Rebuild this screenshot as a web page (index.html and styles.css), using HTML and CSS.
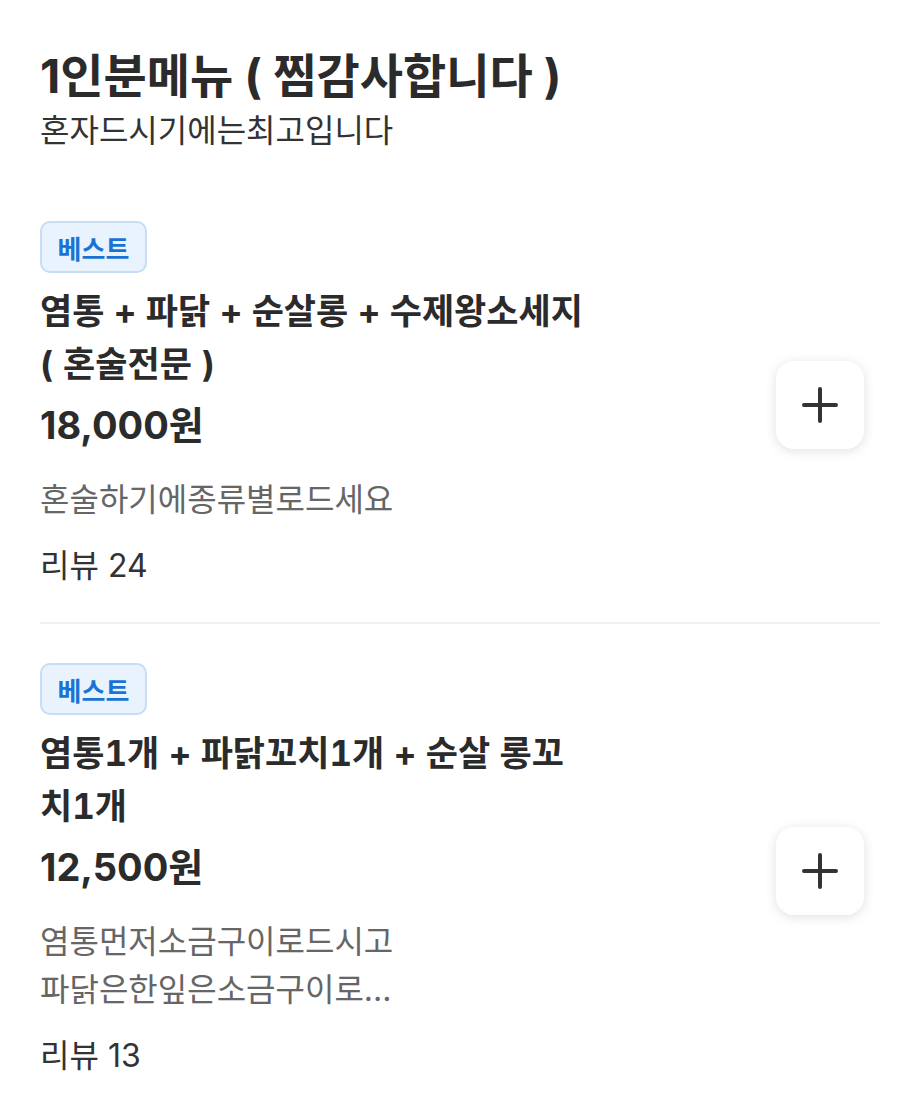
FILE: index.html
```html
<!DOCTYPE html>
<html lang="ko">
<head>
<meta charset="utf-8">
<title>1인분메뉴</title>
<link rel="stylesheet" href="styles.css">
</head>
<body>
<main class="page">
  <header class="section-head">
    <h1 class="section-title">1인분메뉴 ( 찜감사합니다 )</h1>
    <p class="section-sub">혼자드시기에는최고입니다</p>
  </header>

  <ul class="menu-list">
    <li class="menu-item">
      <div class="menu-info">
        <span class="badge">베스트</span>
        <h2 class="menu-name">염통 + 파닭 + 순살롱 + 수제왕소세지 ( 혼술전문 )</h2>
        <p class="menu-price">18,000원</p>
        <p class="menu-desc">혼술하기에종류별로드세요</p>
        <p class="menu-review">리뷰 24</p>
      </div>
      <button class="add-btn" type="button" aria-label="담기">
        <svg width="36" height="36" viewBox="0 0 36 36" aria-hidden="true"><path d="M18 2v32M2 18h32" stroke="#333" stroke-width="4" stroke-linecap="round" fill="none"/></svg>
      </button>
    </li>
    <li class="menu-item">
      <div class="menu-info">
        <span class="badge">베스트</span>
        <h2 class="menu-name">염통1개 + 파닭꼬치1개 + 순살 롱꼬치1개</h2>
        <p class="menu-price">12,500원</p>
        <p class="menu-desc">염통먼저소금구이로드시고<br>파닭은한잎은소금구이로...</p>
        <p class="menu-review">리뷰 13</p>
      </div>
      <button class="add-btn" type="button" aria-label="담기">
        <svg width="36" height="36" viewBox="0 0 36 36" aria-hidden="true"><path d="M18 2v32M2 18h32" stroke="#333" stroke-width="4" stroke-linecap="round" fill="none"/></svg>
      </button>
    </li>
  </ul>
</main>
</body>
</html>
```
FILE: styles.css
```css
* { box-sizing: border-box; }

html, body {
  margin: 0;
  padding: 0;
  background: #ffffff;
}

body {
  font-family: Inter, "Noto Sans CJK KR", "Noto Sans", sans-serif;
  color: #333333;
}

.page {
  padding: 48px 20px 0 40px;
}

.section-title {
  margin: 0;
  font-size: 47px;
  line-height: 56px;
  font-weight: 700;
  color: #2b2b2b;
}

.section-sub {
  margin: 5px 0 0;
  font-size: 32px;
  line-height: 44px;
  color: #333333;
}

.menu-list {
  list-style: none;
  margin: 68px 0 0;
  padding: 0;
}

.menu-item {
  display: flex;
  align-items: center;
  justify-content: space-between;
  padding: 0 0 34px;
  border-bottom: 2px solid #f0f0f0;
}

.menu-item + .menu-item {
  padding-top: 39px;
  border-bottom: none;
}

.menu-info {
  flex: 0 1 546px;
  display: flex;
  flex-direction: column;
  align-items: flex-start;
}

.badge {
  display: inline-flex;
  align-items: center;
  justify-content: center;
  width: 107px;
  height: 52px;
  border: 2px solid #c6ddf6;
  border-radius: 10px;
  background: #e9f3fe;
  color: #1a73d4;
  font-size: 26px;
  font-weight: 700;
}

.menu-name {
  margin: 12px 0 0;
  font-size: 35px;
  line-height: 53px;
  font-weight: 700;
  font-variant-numeric: tabular-nums;
  color: #2b2b2b;
}

.menu-price {
  margin: 10px 0 0;
  font-size: 38px;
  line-height: 48px;
  font-weight: 700;
  color: #2b2b2b;
}

.menu-desc {
  margin: 27px 0 0;
  font-size: 32px;
  line-height: 48px;
  color: #666666;
}

.menu-review {
  margin: 20px 0 0;
  font-size: 32px;
  line-height: 44px;
  color: #333333;
}

.add-btn {
  flex: none;
  width: 88px;
  height: 88px;
  margin-right: 16px;
  display: flex;
  align-items: center;
  justify-content: center;
  padding: 0;
  border: none;
  border-radius: 18px;
  background: #ffffff;
  box-shadow: 0 2px 12px rgba(0, 0, 0, 0.12);
  cursor: pointer;
}
```
